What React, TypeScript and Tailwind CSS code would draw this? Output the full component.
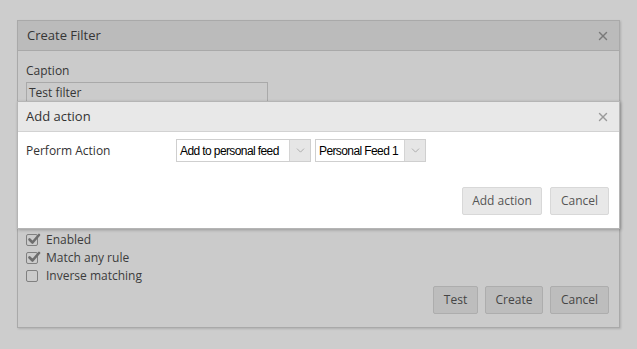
import { ChevronDown, X } from "lucide-react";

const font = { fontFamily: '"Open Sans", "Noto Sans", sans-serif' };

function Checkbox({ checked, label }: { checked: boolean; label: string }) {
    return (
        <label className="flex items-center gap-[8px] h-[18px]">
            <span className="relative w-[12px] h-[12px] rounded-[2px] border border-[#808080]">
                {checked && (
                    <svg viewBox="0 0 14 14" className="absolute left-[0px] -top-[3px] w-[14px] h-[14px]">
                        <path d="M2.5 7.5 L5.5 10.5 L12 3" fill="none" stroke="#6e6e6e" strokeWidth="2.6" strokeLinecap="round" strokeLinejoin="round" />
                    </svg>
                )}
            </span>
            <span className="text-[12px] text-[#3c3c3c]">{label}</span>
        </label>
    );
}

function Select({ value, width }: { value: string; width: string }) {
    return (
        <div className={`flex h-[23px] border border-[#cfcfcf] bg-white ${width}`}>
            <div
                className="flex-1 flex items-center px-[3px] text-[12px] text-black whitespace-nowrap overflow-hidden tracking-[-0.6px]"
                style={{ fontFamily: '"Liberation Sans", Arial, sans-serif' }}
            >
                {value}
            </div>
            <div className="w-[21px] bg-[#e6e6e6] border-l border-[#d4d4d4] flex items-center justify-center">
                <ChevronDown size={13} strokeWidth={1.5} className="text-[#a0a0a0]" />
            </div>
        </div>
    );
}

export default function App() {
    return (
        <div className="relative w-[637px] h-[349px] bg-[#cdcdcd] overflow-hidden" style={font}>
            {/* Create Filter dialog (dimmed) */}
            <div className="absolute left-[17px] top-[20px] w-[603px] h-[308px] bg-[#cbcbcb] border border-[#a9a9a9] shadow-[1px_1px_2px_rgba(0,0,0,0.15)] flex flex-col">
                <div className="h-[30px] bg-[#bbbbbb] border-b border-[#a9a9a9] flex items-center justify-between pl-[9px] pr-[9px]">
                    <span className="text-[13px] text-[#363636]">Create Filter</span>
                    <X size={14} strokeWidth={2.5} className="text-[#7a7a7a]" />
                </div>
                <div className="flex-1 flex flex-col px-[8px] pt-[11px]">
                    <div className="text-[12px] text-[#363636] leading-[18px]">Caption</div>
                    <div className="mt-[2px] w-[242px] h-[21px] border border-[#a9a9a9] bg-[#cbcbcb] px-[2px] text-[12px] text-[#363636] leading-[19px]">
                        Test filter
                    </div>
                    <div className="mt-[128px] flex flex-col">
                        <Checkbox checked label="Enabled" />
                        <Checkbox checked label="Match any rule" />
                        <Checkbox checked={false} label="Inverse matching" />
                    </div>
                    <div className="mt-[1px] flex justify-end gap-[7px] pr-[2px]">
                        <button className="h-[28px] w-[45px] bg-[#bdbdbd] border border-[#adadad] rounded-[2px] text-[12px] text-[#454545]">
                            Test
                        </button>
                        <button className="h-[28px] w-[58px] bg-[#bdbdbd] border border-[#adadad] rounded-[2px] text-[12px] text-[#454545]">
                            Create
                        </button>
                        <button className="h-[28px] w-[59px] bg-[#bdbdbd] border border-[#adadad] rounded-[2px] text-[12px] text-[#454545]">
                            Cancel
                        </button>
                    </div>
                </div>
            </div>

            {/* Add action dialog */}
            <div className="absolute left-[17px] top-[101px] w-[603px] h-[128px] bg-white border border-[#b5b5b5] shadow-[1px_1px_3px_rgba(0,0,0,0.25)] flex flex-col">
                <div className="h-[30px] bg-[#e8e8e8] border-b border-[#d2d2d2] flex items-center justify-between pl-[8px] pr-[9px]">
                    <span className="text-[13px] text-[#333]">Add action</span>
                    <X size={14} strokeWidth={2.5} className="text-[#9a9a9a]" />
                </div>
                <div className="flex-1 flex flex-col px-[8px] pt-[7px]">
                    <div className="flex items-center">
                        <span className="w-[150px] text-[12px] text-[#333]">Perform Action</span>
                        <div className="flex gap-[4px]">
                            <Select value="Add to personal feed" width="w-[135px]" />
                            <Select value="Personal Feed 1" width="w-[111px]" />
                        </div>
                    </div>
                    <div className="mt-[25px] flex justify-end gap-[8px] pr-[2px]">
                        <button className="h-[28px] w-[80px] bg-[#e8e8e8] border border-[#d8d8d8] rounded-[2px] text-[12px] text-[#555]">
                            Add action
                        </button>
                        <button className="h-[28px] w-[59px] bg-[#e8e8e8] border border-[#d8d8d8] rounded-[2px] text-[12px] text-[#555]">
                            Cancel
                        </button>
                    </div>
                </div>
            </div>
        </div>
    );
}
